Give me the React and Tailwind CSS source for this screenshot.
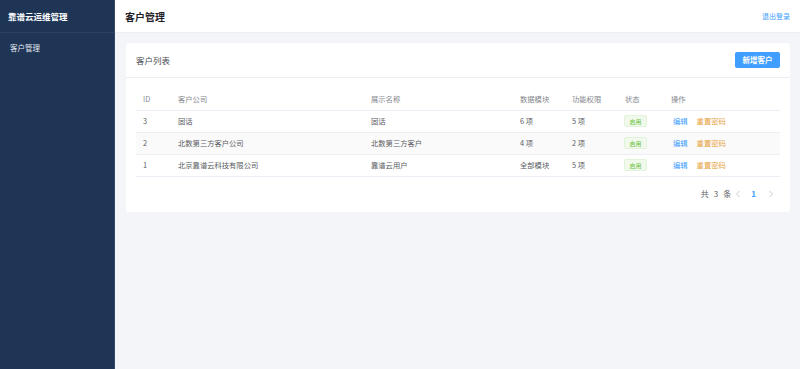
import React from 'react';

const rows = [
  { id: 3, company: '固话', name: '固话', modules: '6 项', perms: '5 项' },
  { id: 2, company: '北数第三方客户公司', name: '北数第三方客户', modules: '4 项', perms: '2 项' },
  { id: 1, company: '北京靠谱云科技有限公司', name: '靠谱云用户', modules: '全部模块', perms: '5 项' },
];

export default function App() {
  return (
    <div
      className="flex h-[369px] w-[800px] overflow-hidden bg-[#f4f5f9]"
      style={{ fontFamily: '"Noto Sans CJK SC", "Noto Sans", sans-serif' }}
    >
      {/* 侧边栏 */}
      <aside className="flex w-[115px] shrink-0 flex-col border-r border-[#34496a] bg-[#1e3556]">
        <div className="flex h-[33px] items-center border-b border-[#2b4264] pl-[8px] text-[8.5px] font-bold text-white">
          靠谱云运维管理
        </div>
        <div className="flex h-[29px] items-center pl-[10px] text-[7.5px] text-[#e4e9f1]">客户管理</div>
      </aside>

      <div className="flex min-w-0 flex-1 flex-col">
        {/* 顶栏 */}
        <header className="flex h-[33px] shrink-0 items-center justify-between border-b border-[#eceef3] bg-white pl-[10px] pr-[10px]">
          <h1 className="text-[10px] font-bold text-[#1f2329]">客户管理</h1>
          <span className="text-[7px] text-[#409eff]">退出登录</span>
        </header>

        <main className="px-[10px] pt-[10px] pl-[11px]">
          <div className="rounded-[3px] bg-white">
            <div className="flex h-[35px] items-center justify-between border-b border-[#ebeef5] px-[10px]">
              <span className="text-[8.5px] text-[#4a4d52]">客户列表</span>
              <button className="h-[16px] w-[45px] rounded-[2px] bg-[#409eff] text-[7.5px] font-bold text-white">
                新增客户
              </button>
            </div>

            <div className="px-[10px] pt-[11px] pb-[9px]">
              <table className="w-full table-fixed border-collapse text-[7.3px]">
                <colgroup>
                  <col className="w-[35px]" />
                  <col className="w-[193px]" />
                  <col className="w-[149px]" />
                  <col className="w-[52px]" />
                  <col className="w-[53px]" />
                  <col className="w-[46px]" />
                  <col />
                </colgroup>
                <thead>
                  <tr className="h-[21px] border-b border-[#ebeef5] text-left text-[#85888e]">
                    <th className="pl-[7px] font-normal">ID</th>
                    <th className="pl-[7px] font-normal">客户公司</th>
                    <th className="pl-[7px] font-normal">展示名称</th>
                    <th className="pl-[7px] font-normal">数据模块</th>
                    <th className="pl-[7px] font-normal">功能权限</th>
                    <th className="pl-[7px] font-normal">状态</th>
                    <th className="pl-[7px] font-normal">操作</th>
                  </tr>
                </thead>
                <tbody className="text-[#5a5d62]">
                  {rows.map((r, i) => (
                    <tr
                      key={r.id}
                      className={`h-[22px] border-b border-[#ebeef5] ${i === 1 ? 'bg-[#fafafa]' : 'bg-white'}`}
                    >
                      <td className="pl-[7px]">{r.id}</td>
                      <td className="pl-[7px]">{r.company}</td>
                      <td className="pl-[7px]">{r.name}</td>
                      <td className="pl-[7px]">{r.modules}</td>
                      <td className="pl-[7px]">{r.perms}</td>
                      <td className="pl-[6px]">
                        <span className="inline-flex h-[12px] w-[23px] items-center justify-center rounded-[2px] border border-[#e1f3d8] bg-[#f0f9eb] text-[6px] text-[#67c23a]">
                          启用
                        </span>
                      </td>
                      <td className="pl-[9px]">
                        <span className="text-[#409eff]">编辑</span>
                        <span className="ml-[9px] text-[#e6a23c]">重置密码</span>
                      </td>
                    </tr>
                  ))}
                </tbody>
              </table>

              <div className="mt-[8px] flex h-[18px] items-center justify-end pr-[6px] text-[8px]">
                <span className="flex items-center gap-[5px] text-[#606266]">
                  <span>共</span>
                  <span>3</span>
                  <span>条</span>
                </span>
                <svg className="ml-[4px]" width="6" height="8" viewBox="0 0 6 8" fill="none">
                  <path d="M4.5 1 L1.5 4 L4.5 7" stroke="#c0c4cc" strokeWidth="0.9" />
                </svg>
                <span className="ml-[10px] font-bold text-[#409eff]">1</span>
                <svg className="ml-[12px]" width="6" height="8" viewBox="0 0 6 8" fill="none">
                  <path d="M1.5 1 L4.5 4 L1.5 7" stroke="#c0c4cc" strokeWidth="0.9" />
                </svg>
              </div>
            </div>
          </div>
        </main>
      </div>
    </div>
  );
}
